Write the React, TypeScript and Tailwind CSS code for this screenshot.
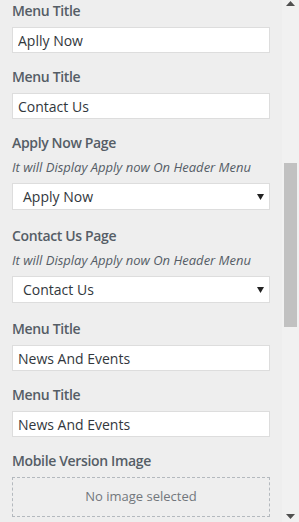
import React from "react";

interface FieldProps {
  label: string;
  value: string;
}

const labelCls =
  "h-[20px] leading-[20px] text-[14px] tracking-[-0.35px] font-semibold text-[#555d66]";

function TextField({ label, value }: Readonly<FieldProps>) {
  return (
    <div className="mb-[14px]">
      <div className={labelCls}>{label}</div>
      <input
        type="text"
        defaultValue={value}
        className="mt-[6px] block w-full h-[26px] px-[5px] bg-white border border-[#dddddd] text-[14px] text-[#32373c] outline-none"
      />
    </div>
  );
}

function SelectField({ label, value }: Readonly<FieldProps>) {
  return (
    <div className="mb-[16px]">
      <div className={labelCls}>{label}</div>
      <div className="mt-[5px] h-[18px] leading-[18px] text-[13px] italic text-[#555d66]">
        It will Display Apply now On Header Menu
      </div>
      <div className="mt-[7px] flex items-center justify-between h-[27px] pl-[10px] pr-[5px] bg-white border border-[#dddddd] text-[14px] text-[#32373c]">
        <span>{value}</span>
        <svg width="7" height="6" viewBox="0 0 7 6">
          <path d="M0 0h7L3.5 6z" fill="#222" />
        </svg>
      </div>
    </div>
  );
}

export default function App() {
  return (
    <div
      className="flex w-[299px] h-[522px] overflow-hidden bg-[#eeeeee]"
      style={{ fontFamily: '"Open Sans", "Noto Sans", sans-serif' }}
    >
      <div className="flex-1 pt-[1px] pl-[12px] pr-[12px]">
        <TextField label="Menu Title" value="Aplly Now" />
        <TextField label="Menu Title" value="Contact Us" />
        <SelectField label="Apply Now Page" value="Apply Now" />
        <SelectField label="Contact Us Page" value="Contact Us" />
        <TextField label="Menu Title" value="News And Events" />
        <TextField label="Menu Title" value="News And Events" />
        <div>
          <div className={labelCls}>Mobile Version Image</div>
          <div className="mt-[6px] flex items-center justify-center h-[40px] border border-dashed border-[#b4b9be] text-[13px] text-[#72777c]">
            No image selected
          </div>
        </div>
      </div>

      {/* scrollbar */}
      <div className="w-[17px] flex flex-col items-center bg-[#f1f1f1]">
        <svg width="9" height="6" viewBox="0 0 9 6" className="mt-[1px]">
          <path d="M4.5 0L9 5H0z" fill="#505050" />
        </svg>
        <div className="mt-[156px] w-[13px] h-[164px] bg-[#c1c1c1]" />
        <div className="flex-1" />
        <svg width="9" height="6" viewBox="0 0 9 6" className="mb-[2px]">
          <path d="M0 0h9L4.5 5z" fill="#505050" />
        </svg>
      </div>
    </div>
  );
}
